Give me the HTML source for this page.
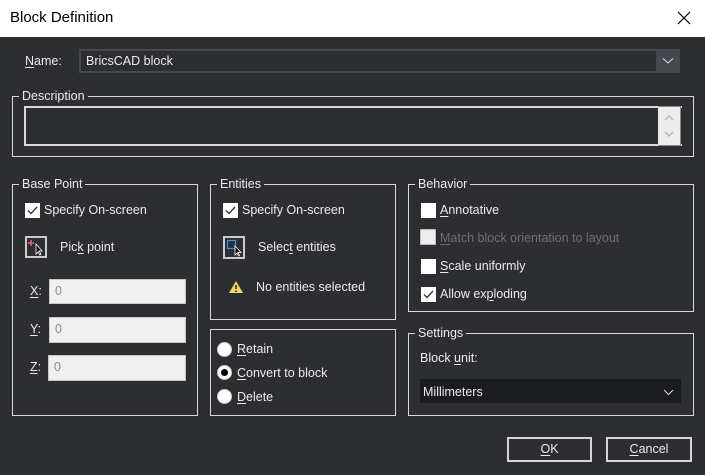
<!DOCTYPE html>
<html><head><style>
*{margin:0;padding:0;box-sizing:border-box}
body{width:705px;height:475px;background:#2d2e32;font-family:"Liberation Sans",sans-serif;font-size:12.5px;color:#ececec;position:relative;overflow:hidden}
.a{position:absolute;white-space:nowrap}
.tb{position:absolute;left:0;top:0;width:705px;height:37px;background:#fff}
.grp{position:absolute;border:1px solid #d8d8d8}
.lg{position:absolute;top:-9px;left:6px;background:#2d2e32;padding:0 3px;line-height:16px}
.cb{position:absolute;width:15px;height:15px;background:#fff}
.cb svg{position:absolute;left:1px;top:1px}
.rd{position:absolute;width:15px;height:15px;border-radius:50%;background:#fff;border:1px solid #ccc}
.fld{position:absolute;background:#f0f0f0;border:1px solid #c8c8c8;color:#8a8a9a;padding:4px 5px;line-height:14px}
.btn{position:absolute;border:2px solid #d4d4d4;text-align:center;line-height:20px;height:25px}
u{text-decoration:underline;text-underline-offset:2px}
</style></head><body>
<div class="tb"></div>
<div class="a" style="left:10px;top:9px;font-size:15px;color:#000">Block Definition</div>
<svg class="a" style="left:677px;top:11px" width="14" height="14"><path d="M1 1L13 13M13 1L1 13" stroke="#000" stroke-width="1.2"/></svg>

<div class="a" style="left:25px;top:54px"><u>N</u>ame:</div>
<div class="a" style="left:79px;top:49px;width:601px;height:24px;background:#45494f"></div>
<div class="a" style="left:81px;top:51px;width:575px;height:20px;background:#2d2e32"></div>
<div class="a" style="left:86px;top:54px">BricsCAD block</div>
<svg class="a" style="left:662px;top:57px" width="12" height="8"><path d="M1 1.5L6 6L11 1.5" stroke="#ddd" fill="none"/></svg>

<div class="grp" style="left:12px;top:96px;width:682px;height:61px"><div class="lg">Description</div></div>
<div class="a" style="left:24px;top:106px;width:658px;height:40px;border:2px solid #d8d8d8;border-right:none"></div>
<div class="a" style="left:658px;top:106px;width:23px;height:40px;background:#ececec;border:1px solid #888;border-left:none"></div>
<svg class="a" style="left:663px;top:112px" width="12" height="30"><path d="M2 8L6 4L10 8M2 20L6 24L10 20" stroke="#bbb" stroke-width="1.5" fill="none"/></svg>

<!-- Base point -->
<div class="grp" style="left:12px;top:184px;width:186px;height:232px"><div class="lg">Base Point</div></div>
<div class="cb" style="left:25px;top:203px"><svg width="13" height="13"><path d="M2 6.5L5 9.5L11 3" stroke="#333" stroke-width="1.3" fill="none"/></svg></div>
<div class="a" style="left:44px;top:203px">Specify On-screen</div>
<div class="a" style="left:25px;top:236px;width:22px;height:22px;border:2px solid #ccc"></div>
<svg class="a" style="left:27px;top:238px" width="18" height="18"><path d="M4 2V8M1 5H7" stroke="#e06080" stroke-width="1.5"/><path d="M9 6V16L11 14L13 17L14 16L12 13H15Z" fill="#000" stroke="#fff" stroke-width="0.8"/></svg>
<div class="a" style="left:60px;top:240px">Pic<u>k</u> point</div>
<div class="a" style="left:30px;top:284px"><u>X</u>:</div>
<div class="fld" style="left:49px;top:279px;width:137px;height:25px">0</div>
<div class="a" style="left:30px;top:322px"><u>Y</u>:</div>
<div class="fld" style="left:49px;top:317px;width:137px;height:26px">0</div>
<div class="a" style="left:30px;top:360px"><u>Z</u>:</div>
<div class="fld" style="left:48px;top:355px;width:138px;height:26px">0</div>

<!-- Entities -->
<div class="grp" style="left:210px;top:184px;width:186px;height:136px"><div class="lg">Entities</div></div>
<div class="cb" style="left:223px;top:203px"><svg width="13" height="13"><path d="M2 6.5L5 9.5L11 3" stroke="#333" stroke-width="1.3" fill="none"/></svg></div>
<div class="a" style="left:242px;top:203px">Specify On-screen</div>
<div class="a" style="left:223px;top:236px;width:22px;height:23px;border:2px solid #ccc"></div>
<svg class="a" style="left:225px;top:238px" width="18" height="19"><rect x="2.5" y="2.5" width="8" height="8" stroke="#3a8ee6" fill="none" stroke-width="1.2"/><path d="M10 8V17L12 15L13.5 18L14.5 17.5L13 14.5H16Z" fill="#000" stroke="#fff" stroke-width="0.8"/></svg>
<div class="a" style="left:258px;top:240px">Selec<u>t</u> entities</div>
<svg class="a" style="left:228px;top:280px" width="16" height="14"><path d="M8 1L15 13H1Z" fill="#f3d36a"/><path d="M8 5V9M8 10.5V12" stroke="#222" stroke-width="1.5"/></svg>
<div class="a" style="left:256px;top:280px">No entities selected</div>

<div class="grp" style="left:210px;top:329px;width:186px;height:87px"></div>
<div class="rd" style="left:217px;top:342px"></div>
<div class="a" style="left:237px;top:342px"><u>R</u>etain</div>
<div class="rd" style="left:217px;top:365px"><div style="position:absolute;left:3px;top:3px;width:7px;height:7px;border-radius:50%;background:#000"></div></div>
<div class="a" style="left:237px;top:366px"><u>C</u>onvert to block</div>
<div class="rd" style="left:217px;top:389px"></div>
<div class="a" style="left:237px;top:390px"><u>D</u>elete</div>

<!-- Behavior -->
<div class="grp" style="left:408px;top:184px;width:286px;height:128px"><div class="lg">Behavior</div></div>
<div class="cb" style="left:421px;top:203px"></div>
<div class="a" style="left:440px;top:203px"><u>A</u>nnotative</div>
<div class="cb" style="left:420px;top:229px;width:16px;height:16px;background:#eee;border:1px solid #bbb"></div>
<div class="a" style="left:440px;top:231px;color:#6f6f73"><u>M</u>atch block orientation to layout</div>
<div class="cb" style="left:421px;top:259px"></div>
<div class="a" style="left:440px;top:259px"><u>S</u>cale uniformly</div>
<div class="cb" style="left:421px;top:287px"><svg width="13" height="13"><path d="M2 6.5L5 9.5L11 3" stroke="#333" stroke-width="1.3" fill="none"/></svg></div>
<div class="a" style="left:440px;top:287px">Allow ex<u>p</u>loding</div>

<!-- Settings -->
<div class="grp" style="left:408px;top:333px;width:286px;height:83px"><div class="lg">Settings</div></div>
<div class="a" style="left:420px;top:351px">Block <u>u</u>nit:</div>
<div class="a" style="left:420px;top:379px;width:261px;height:24px;background:#1b1c20"></div>
<div class="a" style="left:423px;top:385px">Millimeters</div>
<svg class="a" style="left:663px;top:389px" width="11" height="7"><path d="M1 1L5.5 5.5L10 1" stroke="#ddd" fill="none"/></svg>

<div class="btn" style="left:507px;top:437px;width:85px"><u>O</u>K</div>
<div class="btn" style="left:606px;top:437px;width:86px"><u>C</u>ancel</div>
</body></html>
